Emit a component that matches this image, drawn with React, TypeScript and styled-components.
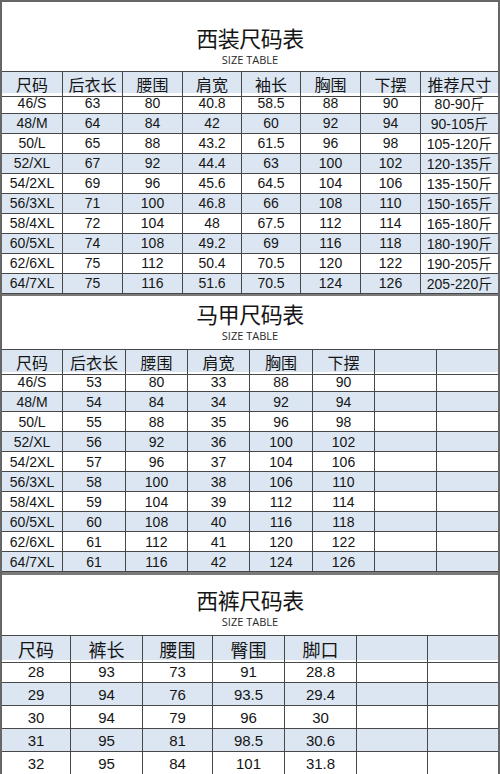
import React from 'react';
import styled, { createGlobalStyle } from 'styled-components';

const GlobalStyle = createGlobalStyle`
  html, body {
    margin: 0;
    padding: 0;
    background: #ffffff;
  }
  body {
    font-family: 'Liberation Sans', 'Noto Sans CJK SC', sans-serif;
    color: #1a1a1a;
  }
`;

const LINE = '#474747';
const BLUE = '#dbe6f2';

const Frame = styled.div`
  width: 500px;
  box-sizing: border-box;
  border-left: 2px solid #666666;
  border-right: 2px solid #666666;
  border-top: 2px solid #666666;
  background: #ffffff;
  overflow: hidden;
`;

const Section = styled.section<{ $first?: boolean }>`
  border-top: ${({ $first }) => ($first ? 'none' : '3px solid #7a7a7a')};
`;

const TitleBlock = styled.div<{ $h: number; $pb: number }>`
  height: ${({ $h }) => $h}px;
  box-sizing: border-box;
  display: flex;
  flex-direction: column;
  justify-content: flex-end;
  align-items: center;
  padding-bottom: ${({ $pb }) => $pb}px;
  border-bottom: 1px solid ${LINE};
`;

const Title = styled.h2`
  margin: 0;
  font-family: 'Noto Sans CJK SC', sans-serif;
  font-weight: 400;
  font-size: 22px;
  line-height: 22px;
  color: #151515;
  letter-spacing: -0.5px;
`;

const SubTitle = styled.div`
  margin-top: 6px;
  font-family: 'Open Sans', 'Liberation Sans', sans-serif;
  font-size: 11px;
  line-height: 12px;
  color: #2a2a2a;
`;

const Row = styled.div<{ $cols: string; $h: number; $blue: boolean }>`
  display: grid;
  grid-template-columns: ${({ $cols }) => $cols};
  height: ${({ $h }) => $h}px;
  background: ${({ $blue }) => ($blue ? BLUE : '#ffffff')};
`;

const Cell = styled.div<{ $size: number; $head?: boolean }>`
  box-sizing: border-box;
  border-right: 1px solid ${LINE};
  border-bottom: 1px solid ${LINE};
  display: flex;
  align-items: center;
  justify-content: center;
  white-space: nowrap;
  font-family: ${({ $head }) =>
    $head
      ? "'Noto Sans CJK SC', sans-serif"
      : "'Liberation Sans', 'Noto Sans CJK SC', sans-serif"};
  font-size: ${({ $size }) => $size}px;
  color: #151515;
  &:last-child {
    border-right: none;
  }
`;

type TableSpec = {
  title: string;
  titleH: number;
  titlePb: number;
  cols: string;
  headH: number;
  rowH: number;
  headSize: number;
  bodySize: number;
  head: string[];
  rows: string[][];
};

const suit: TableSpec = {
  title: '西装尺码表',
  titleH: 70,
  titlePb: 5,
  cols: '61px 60px 60px 59px 59px 60px 60px 77px',
  headH: 21,
  rowH: 20,
  headSize: 16,
  bodySize: 14,
  head: ['尺码', '后衣长', '腰围', '肩宽', '袖长', '胸围', '下摆', '推荐尺寸'],
  rows: [
    ['46/S', '63', '80', '40.8', '58.5', '88', '90', '80-90斤'],
    ['48/M', '64', '84', '42', '60', '92', '94', '90-105斤'],
    ['50/L', '65', '88', '43.2', '61.5', '96', '98', '105-120斤'],
    ['52/XL', '67', '92', '44.4', '63', '100', '102', '120-135斤'],
    ['54/2XL', '69', '96', '45.6', '64.5', '104', '106', '135-150斤'],
    ['56/3XL', '71', '100', '46.8', '66', '108', '110', '150-165斤'],
    ['58/4XL', '72', '104', '48', '67.5', '112', '114', '165-180斤'],
    ['60/5XL', '74', '108', '49.2', '69', '116', '118', '180-190斤'],
    ['62/6XL', '75', '112', '50.4', '70.5', '120', '122', '190-205斤'],
    ['64/7XL', '75', '116', '51.6', '70.5', '124', '126', '205-220斤'],
  ],
};

const vest: TableSpec = {
  title: '马甲尺码表',
  titleH: 54,
  titlePb: 7,
  cols: '61px 63px 62px 62px 63px 62px 62px 61px',
  headH: 22,
  rowH: 20,
  headSize: 16,
  bodySize: 14,
  head: ['尺码', '后衣长', '腰围', '肩宽', '胸围', '下摆', '', ''],
  rows: [
    ['46/S', '53', '80', '33', '88', '90', '', ''],
    ['48/M', '54', '84', '34', '92', '94', '', ''],
    ['50/L', '55', '88', '35', '96', '98', '', ''],
    ['52/XL', '56', '92', '36', '100', '102', '', ''],
    ['54/2XL', '57', '96', '37', '104', '106', '', ''],
    ['56/3XL', '58', '100', '38', '106', '110', '', ''],
    ['58/4XL', '59', '104', '39', '112', '114', '', ''],
    ['60/5XL', '60', '108', '40', '116', '118', '', ''],
    ['62/6XL', '61', '112', '41', '120', '122', '', ''],
    ['64/7XL', '61', '116', '42', '124', '126', '', ''],
  ],
};

const pants: TableSpec = {
  title: '西裤尺码表',
  titleH: 61,
  titlePb: 7,
  cols: '69px 72px 70px 72px 72px 71px 70px',
  headH: 24,
  rowH: 23,
  headSize: 18,
  bodySize: 15,
  head: ['尺码', '裤长', '腰围', '臀围', '脚口', '', ''],
  rows: [
    ['28', '93', '73', '91', '28.8', '', ''],
    ['29', '94', '76', '93.5', '29.4', '', ''],
    ['30', '94', '79', '96', '30', '', ''],
    ['31', '95', '81', '98.5', '30.6', '', ''],
    ['32', '95', '84', '101', '31.8', '', ''],
  ],
};

const SizeTable = ({ spec, first }: { spec: TableSpec; first?: boolean }) => (
  <Section $first={first}>
    <TitleBlock $h={spec.titleH} $pb={spec.titlePb}>
      <Title>{spec.title}</Title>
      <SubTitle>SIZE TABLE</SubTitle>
    </TitleBlock>
    <Row $cols={spec.cols} $h={spec.headH} $blue>
      {spec.head.map((h, i) => (
        <Cell key={i} $size={spec.headSize} $head>
          {h}
        </Cell>
      ))}
    </Row>
    {spec.rows.map((r, ri) => (
      <Row key={ri} $cols={spec.cols} $h={spec.rowH} $blue={ri % 2 === 1}>
        {r.map((v, ci) => (
          <Cell key={ci} $size={spec.bodySize}>
            {v}
          </Cell>
        ))}
      </Row>
    ))}
  </Section>
);

const App = () => (
  <>
    <GlobalStyle />
    <Frame>
      <SizeTable spec={suit} first />
      <SizeTable spec={vest} />
      <SizeTable spec={pants} />
    </Frame>
  </>
);

export default App;
